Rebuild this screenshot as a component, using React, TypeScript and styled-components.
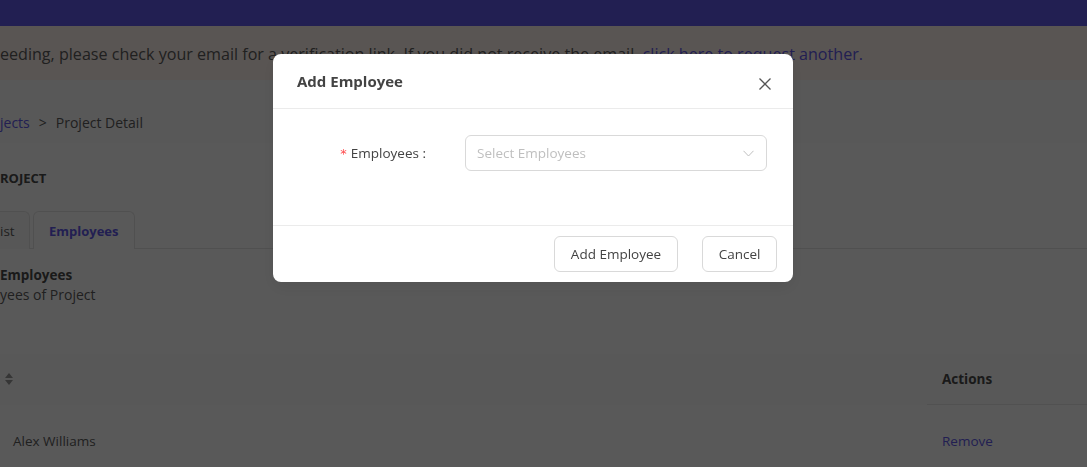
import React from "react";
import styled, { createGlobalStyle } from "styled-components";

const GlobalStyle = createGlobalStyle`
  html, body { margin: 0; padding: 0; background: #ffffff; overflow: hidden; }
  body { font-family: "Open Sans", "Liberation Sans", sans-serif; }
  * { box-sizing: border-box; }
`;

const Page = styled.div`
  width: 1087px;
  height: 467px;
  display: flex;
  flex-direction: column;
  background: #ffffff;
  color: #5c5c5c;
  overflow: hidden;
`;

const TopBar = styled.div`
  height: 26px;
  background: #6159ea;
  flex-shrink: 0;
`;

const Banner = styled.div`
  height: 54px;
  background: #fff3ed;
  display: flex;
  align-items: center;
  padding-top: 2px;
  font-size: 16.1px;
  color: #5c5c5c;
  white-space: nowrap;
  box-shadow: 0 2px 3px rgba(0, 0, 0, 0.06);
  flex-shrink: 0;
`;

const Link = styled.span`
  color: #6159ea;
`;

const CrumbBar = styled.div`
  height: 63px;
  background: #fbfbfb;
  display: flex;
  align-items: flex-end;
  padding-bottom: 11px;
  font-size: 14px;
  gap: 9px;
  flex-shrink: 0;
`;

const Content = styled.div`
  display: flex;
  flex-direction: column;
`;

const SectionTitle = styled.div`
  margin-top: 27px;
  height: 16px;
  line-height: 16px;
  font-size: 13px;
  font-weight: 700;
  color: #4a4a4a;
`;

const Tabs = styled.div`
  margin-top: 24px;
  height: 39px;
  display: flex;
  align-items: flex-end;
  gap: 3px;
  border-bottom: 1px solid #e6e6e6;
`;

const Tab = styled.div<{ $active?: boolean }>`
  height: 38px;
  display: flex;
  align-items: center;
  padding: 0 16px;
  font-size: 13.5px;
  font-weight: ${(p) => (p.$active ? 700 : 400)};
  color: ${(p) => (p.$active ? "#6159ea" : "#5c5c5c")};
  border: 1px solid #e6e6e6;
  border-bottom: none;
  border-radius: 6px 6px 0 0;
  background: ${(p) => (p.$active ? "#ffffff" : "#fafafa")};
  margin-bottom: -1px;
`;

const ActiveTab = styled(Tab)`
  font-size: 13px;
  padding: 0 15px;
`;

const FirstTab = styled(Tab)`
  width: 30px;
  padding: 0;
  border-left: none;
  border-radius: 0 6px 0 0;
`;

const SubHead = styled.div`
  margin-top: 17px;
  font-size: 13.5px;
  font-weight: 700;
  line-height: 18px;
  color: #4a4a4a;
`;

const SubText = styled.div`
  margin-top: 2px;
  font-size: 14px;
  line-height: 18px;
`;

const Table = styled.div`
  margin-top: 50px;
  display: flex;
  flex-direction: column;
`;

const Row = styled.div<{ $head?: boolean }>`
  height: ${(p) => (p.$head ? 51 : 72)}px;
  display: grid;
  grid-template-columns: 927px 1fr;
  background: ${(p) => (p.$head ? "#fcfcfc" : "#ffffff")};
`;

const HeadCell = styled.div<{ $bordered?: boolean }>`
  display: flex;
  align-items: center;
  padding-left: ${(p) => (p.$bordered ? "15px" : "5px")};
  font-size: 13.5px;
  font-weight: 700;
  color: #4a4a4a;
  border-bottom: 1px solid ${(p) => (p.$bordered ? "#e8e8e8" : "transparent")};
`;

const BodyCell = styled.div<{ $pad?: number }>`
  display: flex;
  align-items: center;
  padding-left: ${(p) => p.$pad ?? 13}px;
  font-size: 13.5px;
`;

const Mask = styled.div`
  position: fixed;
  inset: 0;
  z-index: 10;
  background: rgba(0, 0, 0, 0.65);
`;

const Modal = styled.div`
  position: fixed;
  z-index: 11;
  left: 273px;
  top: 54px;
  width: 520px;
  height: 228px;
  background: #ffffff;
  border-radius: 8px;
  display: flex;
  flex-direction: column;
  box-shadow: 0 6px 16px rgba(0, 0, 0, 0.08);
  color: #434343;
`;

const ModalHeader = styled.div`
  height: 55px;
  display: flex;
  align-items: center;
  justify-content: space-between;
  padding: 0 22px 0 24px;
  border-bottom: 1px solid #ebebeb;
`;

const ModalTitle = styled.div`
  font-size: 15px;
  font-weight: 700;
  color: #434343;
`;

const CloseButton = styled.button`
  width: 12px;
  height: 12px;
  margin-top: 5px;
  padding: 0;
  border: none;
  background: transparent;
  display: flex;
  align-items: center;
  justify-content: center;
`;

const ModalBody = styled.div`
  height: 117px;
  padding: 26px 26px 0 24px;
  border-bottom: 1px solid #ebebeb;
`;

const FormRow = styled.div`
  display: grid;
  grid-template-columns: 129px 1fr;
  column-gap: 39px;
  align-items: center;
`;

const Label = styled.label`
  text-align: right;
  font-size: 13.5px;
  color: #434343;
  white-space: nowrap;
`;

const Required = styled.span`
  color: #ff4d4f;
  margin-right: 4px;
  font-family: "DejaVu Sans", sans-serif;
  font-size: 13px;
`;

const Select = styled.div`
  height: 36px;
  border: 1px solid #d9d9d9;
  border-radius: 6px;
  display: flex;
  align-items: center;
  justify-content: space-between;
  padding: 0 12px 0 11px;
  font-size: 13.5px;
  color: #bfbfbf;
`;

const ModalFooter = styled.div`
  flex: 1;
  display: flex;
  justify-content: flex-end;
  align-items: flex-start;
  gap: 24px;
  padding: 10px 16px 0 0;
`;

const Button = styled.button<{ $w: number }>`
  width: ${(p) => p.$w}px;
  height: 36px;
  padding: 0;
  border: 1px solid #d9d9d9;
  border-radius: 6px;
  background: #ffffff;
  font-family: inherit;
  font-size: 13.5px;
  color: #434343;
`;

const SortIcon = () => (
  <svg width="8" height="12" viewBox="0 0 8 12">
    <path d="M4 0 L8 5 L0 5 Z" fill="#3a3a3a" fillOpacity="0.5" />
    <path d="M4 12 L8 7 L0 7 Z" fill="#3a3a3a" fillOpacity="0.5" />
  </svg>
);

export default function App() {
  return (
    <>
      <GlobalStyle />
      <Page>
        <TopBar />
        <Banner>
          <span>
            eeding, please check your email for a verification link. If you did not receive the email,{" "}
            <Link>click here to request another.</Link>
          </span>
        </Banner>
        <CrumbBar>
          <Link>jects</Link>
          <span>&gt;</span>
          <span>Project Detail</span>
        </CrumbBar>
        <Content>
          <SectionTitle>ROJECT</SectionTitle>
          <Tabs>
            <FirstTab>ist</FirstTab>
            <ActiveTab $active>Employees</ActiveTab>
          </Tabs>
          <SubHead>Employees</SubHead>
          <SubText>yees of Project</SubText>
          <Table>
            <Row $head>
              <HeadCell>
                <SortIcon />
              </HeadCell>
              <HeadCell $bordered>Actions</HeadCell>
            </Row>
            <Row>
              <BodyCell>Alex Williams</BodyCell>
              <BodyCell $pad={15}>
                <Link>Remove</Link>
              </BodyCell>
            </Row>
          </Table>
        </Content>
      </Page>
      <Mask />
      <Modal role="dialog">
        <ModalHeader>
          <ModalTitle>Add Employee</ModalTitle>
          <CloseButton aria-label="Close">
            <svg width="12" height="12" viewBox="0 0 12 12">
              <path d="M0.5 0.5 L11.5 11.5 M11.5 0.5 L0.5 11.5" stroke="#555" strokeWidth="1.3" />
            </svg>
          </CloseButton>
        </ModalHeader>
        <ModalBody>
          <FormRow>
            <Label>
              <Required>*</Required>Employees :
            </Label>
            <Select>
              <span>Select Employees</span>
              <svg width="11" height="7" viewBox="0 0 11 7">
                <path d="M0.5 0.8 L5.5 6 L10.5 0.8" fill="none" stroke="#bfbfbf" strokeWidth="1" />
              </svg>
            </Select>
          </FormRow>
        </ModalBody>
        <ModalFooter>
          <Button $w={124}>Add Employee</Button>
          <Button $w={75}>Cancel</Button>
        </ModalFooter>
      </Modal>
    </>
  );
}
